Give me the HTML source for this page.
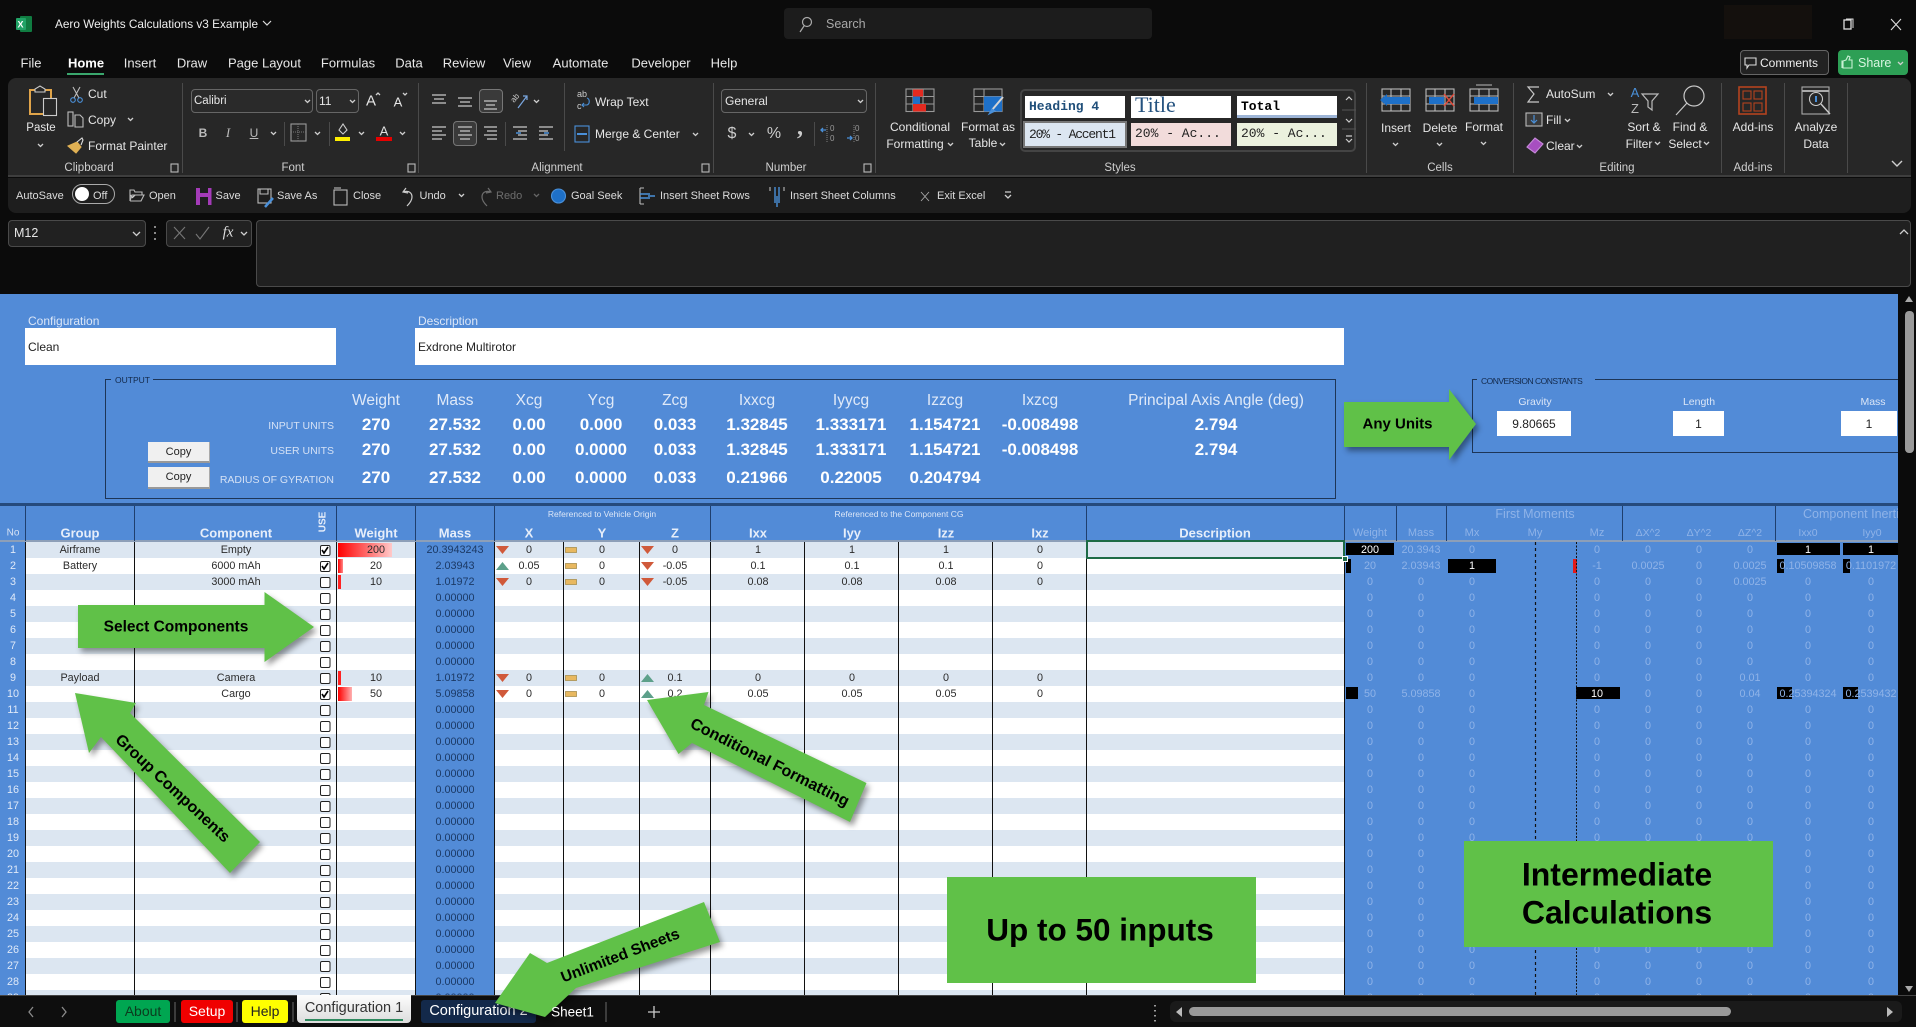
<!DOCTYPE html>
<html><head><meta charset="utf-8"><title>Aero Weights Calculations v3 Example</title>
<style>
html,body{margin:0;padding:0;background:#0b0b0b}
#w{position:relative;width:1916px;height:1027px;overflow:hidden;background:#0b0b0b;font-family:"Liberation Sans",sans-serif;color:#e6e6e6;font-size:12px}
.c{position:absolute;transform:translate(-50%,-50%);white-space:nowrap}
.l{position:absolute;transform:translateY(-50%);white-space:nowrap}
.b{position:absolute;box-sizing:border-box}
svg{position:absolute;left:0;top:0;overflow:visible}
.m{font-size:13px;color:#e8e8e8}
.g{font-size:11.5px;color:#cfcfcf;top:168px}
.q{font-size:11px;color:#dcdcdc;top:196px}
.col{position:absolute;top:542px;transform:translateX(-50%);text-align:center;line-height:16px;white-space:pre;font-size:10.8px;color:#2b2b2b}
.f{color:#8fb3e8}
.w{color:#fff}
.h{font-size:13px;font-weight:bold;color:#e6eefa;top:533px}
.oh{font-size:15.5px;color:#dfe9f8;top:401px}
.ov{font-size:17px;font-weight:bold;color:#fff}
.ol{font-size:10.5px;color:#d4e1f5}
.st{position:absolute;box-sizing:border-box;overflow:hidden;white-space:nowrap;font-family:"Liberation Mono",monospace;font-size:13px;color:#222;line-height:21px;padding-left:4px}
.tab{position:absolute;box-sizing:border-box;top:1000px;height:23px;border-radius:3px;text-align:center;line-height:23px;font-size:14px}
.v{position:absolute;width:1px;top:542px;height:453px;background:#111}
.hv{position:absolute;width:1px;top:506px;height:35px;background:#1f3f6e}
.sep{position:absolute;width:1px;top:83px;height:90px;background:#4a4a4a}
</style></head><body><div id="w">

<!-- title bar -->
<svg width="1916" height="300">
<rect x="20" y="16" width="12" height="16" rx="1" fill="#107c41"/><rect x="16" y="18" width="10" height="12" rx="1" fill="#21a366"/>
<text x="17.500" y="27.500" font-size="9" font-weight="bold" fill="#fff" font-family="Liberation Sans">X</text>
<path d="M263 21l4 4 4-4" fill="none" stroke="#ddd" stroke-width="1.2"/>
<rect x="1844" y="20" width="7" height="9" fill="none" stroke="#ddd" stroke-width="1.3"/><path d="M1846 19h7v9" fill="none" stroke="#ddd"/>
<path d="M1891 19l10 11M1901 19l-10 11" stroke="#ddd" stroke-width="1.1"/>
</svg>
<div class="b" style="left:784px;top:8px;width:368px;height:31px;background:#1c1c1c;border-radius:4px"></div>
<div class="l" style="left:826px;top:24px;color:#a8a8a8;font-size:12.5px">Search</div>
<div class="l" style="left:55px;top:24px;font-size:11.8px;color:#efefef">Aero Weights Calculations v3 Example</div>
<svg width="1916" height="60"><circle cx="807" cy="22" r="4.5" fill="none" stroke="#aaa" stroke-width="1.2"/><path d="M804 26l-4 6" stroke="#aaa" stroke-width="1.2"/></svg>
<div class="b" style="left:1724px;top:5px;width:88px;height:34px;background:#14100d"></div>

<!-- menu -->
<div class="c m" style="left:31px;top:63px">File</div>
<div class="c m" style="left:86px;top:63px;color:#fff;font-weight:bold">Home</div>
<div class="b" style="left:67px;top:72.5px;width:37px;height:2px;background:#3aa76d"></div>
<div class="c m" style="left:140px;top:63px">Insert</div>
<div class="c m" style="left:192px;top:63px">Draw</div>
<div class="c m" style="left:264.5px;top:63px">Page Layout</div>
<div class="c m" style="left:348px;top:63px">Formulas</div>
<div class="c m" style="left:409px;top:63px">Data</div>
<div class="c m" style="left:464px;top:63px">Review</div>
<div class="c m" style="left:517px;top:63px">View</div>
<div class="c m" style="left:580.5px;top:63px">Automate</div>
<div class="c m" style="left:661px;top:63px">Developer</div>
<div class="c m" style="left:724px;top:63px">Help</div>
<div class="b" style="left:1740px;top:50px;width:89px;height:25px;border:1px solid #666;border-radius:4px;background:#222"></div>
<div class="l" style="left:1760px;top:63px;font-size:12px;color:#eee">Comments</div>
<div class="b" style="left:1838px;top:50px;width:70px;height:25px;border-radius:4px;background:#2d9f55"></div>
<div class="l" style="left:1858px;top:63px;font-size:12.5px;color:#d8f5e0">Share</div>

<!-- ribbon -->
<div class="b" style="left:8px;top:78px;width:1903px;height:99px;background:#272727;border-radius:8px 8px 0 0;border-bottom:2px solid #3e3e3e"></div>
<div class="b" style="left:8px;top:178px;width:1903px;height:35px;background:#1e1e1e;border-radius:0 0 8px 8px"></div>

<div class="sep" style="left:182px"></div><div class="sep" style="left:418px"></div><div class="sep" style="left:713px"></div><div class="sep" style="left:875px"></div><div class="sep" style="left:1366px"></div><div class="sep" style="left:1513px"></div><div class="sep" style="left:1721px"></div><div class="sep" style="left:1784px"></div><div class="sep" style="left:1847px"></div>
<div class="b" style="left:284px;top:122px;width:1px;height:24px;background:#4a4a4a"></div>
<div class="b" style="left:329px;top:122px;width:1px;height:24px;background:#4a4a4a"></div>
<div class="b" style="left:505px;top:122px;width:1px;height:24px;background:#4a4a4a"></div>
<div class="b" style="left:564px;top:83px;width:1px;height:68px;background:#4a4a4a"></div>
<div class="b" style="left:814px;top:122px;width:1px;height:24px;background:#4a4a4a"></div>

<!-- clipboard -->
<div class="c" style="left:41px;top:128px;font-size:11.5px">Paste</div>
<div class="l" style="left:88px;top:94px">Cut</div>
<div class="l" style="left:88px;top:120px">Copy</div>
<div class="l" style="left:88px;top:146px">Format Painter</div>
<div class="c g" style="left:89px">Clipboard</div>

<!-- font -->
<div class="b" style="left:191px;top:89px;width:122px;height:24px;border:1px solid #666;border-radius:4px;background:#2a2a2a"></div>
<div class="l" style="left:194px;top:101px;font-size:11.5px">Calibri</div>
<div class="b" style="left:316px;top:89px;width:43px;height:24px;border:1px solid #666;border-radius:4px;background:#2a2a2a"></div>
<div class="l" style="left:319px;top:101px;font-size:12px">11</div>
<div class="c" style="left:371px;top:101px;font-size:15px">A</div>
<div class="c" style="left:398px;top:102px;font-size:13px">A</div>
<div class="c" style="left:203px;top:133px;font-weight:bold;color:#bbb;font-size:12px">B</div>
<div class="c" style="left:228px;top:133px;font-style:italic;color:#bbb;font-family:'Liberation Serif',serif;font-size:13px">I</div>
<div class="c" style="left:254px;top:133px;text-decoration:underline;color:#bbb">U</div>
<div class="c" style="left:384px;top:131px;font-size:13px;color:#ddd">A</div>
<div class="c g" style="left:293px">Font</div>

<!-- alignment -->
<div class="b" style="left:479px;top:89px;width:24px;height:24px;border:1px solid #777;border-radius:4px;background:#3a3a3a"></div>
<div class="b" style="left:453px;top:121px;width:24px;height:25px;border:1px solid #777;border-radius:4px;background:#3a3a3a"></div>
<div class="l" style="left:595px;top:102px">Wrap Text</div>
<div class="l" style="left:595px;top:134px">Merge &amp; Center</div>
<div class="c g" style="left:557px">Alignment</div>

<!-- number -->
<div class="b" style="left:721px;top:89px;width:146px;height:24px;border:1px solid #666;border-radius:4px;background:#2a2a2a"></div>
<div class="l" style="left:725px;top:101px;font-size:12px">General</div>
<div class="c" style="left:732px;top:134px;font-size:16px;color:#ccc">$</div>
<div class="c" style="left:774px;top:134px;font-size:16px;color:#ccc">%</div>
<div class="c" style="left:800px;top:128px;font-size:24px;font-weight:bold;color:#ccc;font-family:'Liberation Serif',serif">,</div>
<div class="c g" style="left:786px">Number</div>

<!-- styles -->
<div class="c" style="left:920px;top:127px">Conditional</div>
<div class="c" style="left:915px;top:144px">Formatting</div>
<div class="c" style="left:988px;top:127px">Format as</div>
<div class="c" style="left:983px;top:143px">Table</div>
<div class="b" style="left:1020px;top:89px;width:336px;height:63px;border:2px solid #444;border-radius:5px"></div>
<div class="st" style="left:1025px;top:96px;width:100px;height:21.5px;background:#fff;color:#1f4e79;font-weight:bold">Heading 4</div>
<div class="st" style="left:1131px;top:96px;width:100px;height:21.5px;background:#fff;color:#24527f;font-family:'Liberation Serif',serif;font-size:22px;line-height:17px;padding-left:4px">Title</div>
<div class="st" style="left:1237px;top:96px;width:100px;height:21.5px;background:#fff;color:#000;font-weight:bold;border-bottom:3px solid #9db4d6">Total</div>
<div class="st" style="left:1023px;top:121px;width:104px;height:27px;background:#dce6f1;border:2px solid #777;line-height:23px;letter-spacing:-1.2px">20% - Accent1</div>
<div class="st" style="left:1131px;top:123px;width:100px;height:23px;background:#f2dcdb">20% - Ac...</div>
<div class="st" style="left:1237px;top:123px;width:100px;height:23px;background:#ebf1de">20% - Ac...</div>
<div class="c g" style="left:1120px">Styles</div>

<!-- cells -->
<div class="c" style="left:1396px;top:128px">Insert</div>
<div class="c" style="left:1440px;top:128px">Delete</div>
<div class="c" style="left:1484px;top:127px">Format</div>
<div class="c g" style="left:1440px">Cells</div>

<!-- editing -->
<div class="l" style="left:1546px;top:94px">AutoSum</div>
<div class="l" style="left:1546px;top:120px">Fill</div>
<div class="l" style="left:1546px;top:146px">Clear</div>
<div class="c" style="left:1644px;top:127px">Sort &amp;</div>
<div class="c" style="left:1639px;top:144px">Filter</div>
<div class="c" style="left:1690px;top:127px">Find &amp;</div>
<div class="c" style="left:1685px;top:144px">Select</div>
<div class="c g" style="left:1617px">Editing</div>
<div class="c" style="left:1753px;top:127px">Add-ins</div>
<div class="c g" style="left:1753px">Add-ins</div>
<div class="c" style="left:1816px;top:127px">Analyze</div>
<div class="c" style="left:1816px;top:144px">Data</div>

<!-- QAT -->
<div class="l q" style="left:16px">AutoSave</div>
<div class="b" style="left:72px;top:184px;width:43px;height:20px;border:1.5px solid #aaa;border-radius:10px"></div>
<div class="b" style="left:75px;top:187px;width:14px;height:14px;border-radius:50%;background:#fff"></div>
<div class="l q" style="left:93px">Off</div>
<div class="l q" style="left:149px">Open</div>
<div class="l q" style="left:215.5px">Save</div>
<div class="l q" style="left:277px">Save As</div>
<div class="l q" style="left:353px">Close</div>
<div class="l q" style="left:419.5px">Undo</div>
<div class="l q" style="left:496px;color:#6d6d6d">Redo</div>
<div class="l q" style="left:571px">Goal Seek</div>
<div class="l q" style="left:660px">Insert Sheet Rows</div>
<div class="l q" style="left:790px">Insert Sheet Columns</div>
<div class="l q" style="left:937px">Exit Excel</div>

<!-- formula bar -->
<div class="b" style="left:8px;top:220px;width:138px;height:27px;background:#212121;border:1px solid #4a4a4a;border-radius:4px"></div>
<div class="l" style="left:14px;top:233px;font-size:12.5px">M12</div>
<div class="b" style="left:166px;top:220px;width:86px;height:27px;background:#212121;border:1px solid #4a4a4a;border-radius:4px"></div>
<div class="c" style="left:228px;top:233px;font-family:'Liberation Serif',serif;font-style:italic;font-size:15px;color:#ddd">fx</div>
<div class="b" style="left:256px;top:220px;width:1655px;height:67px;background:#202020;border:1px solid #4a4a4a;border-radius:4px"></div>

<!-- ribbon icons -->
<svg width="1916" height="300" fill="none" stroke="#bdbdbd" stroke-width="1.1" font-family="Liberation Sans">
<path d="M35 90h-5v24h13" stroke="#e0a44a" stroke-width="2"/><path d="M45 90h6v8" stroke="#e0a44a" stroke-width="2"/><path d="M35 92v-3l5-3 5 3v3z" stroke="#ccc"/>
<rect x="43.500" y="98.500" width="13" height="17" stroke="#ccc"/>
<path d="M73 87l6 11M80 87l-6 11"/><circle cx="73" cy="100" r="2.300" stroke="#4a90d9"/><circle cx="80" cy="100" r="2.300" stroke="#4a90d9"/>
<rect x="68" y="112" width="5" height="14"/><path d="M75 115h5l3 3v9H75z"/>
<path d="M68 146l9-4 4 5-5 6z" fill="#e0b154" stroke="#e0b154"/><path d="M77 142l5-4 1 2-2 5" stroke="#ddd"/>
<!-- dropdown chevrons -->
<g stroke="#cfcfcf" stroke-width="1.3">
<path d="M38 144l2.500 2.500 2.500-2.500"/><path d="M128 118l2.500 2.500 2.500-2.500"/>
<path d="M305 100l2.500 2.500 2.500-2.500"/><path d="M350 100l2.500 2.500 2.500-2.500"/><path d="M271 132l2.500 2.500 2.500-2.500"/><path d="M315 132l2.500 2.500 2.500-2.500"/><path d="M359 132l2.500 2.500 2.500-2.500"/><path d="M400 132l2.500 2.500 2.500-2.500"/>
<path d="M534 100l2.500 2.500 2.500-2.500"/><path d="M693 133l2.500 2.500 2.500-2.500"/>
<path d="M858 100l2.500 2.500 2.500-2.500"/><path d="M749 133l2.500 2.500 2.500-2.500"/>
<path d="M948 143l2.500 2.500 2.500-2.500"/><path d="M1000 143l2.500 2.500 2.500-2.500"/>
<path d="M1393 143l2.500 2.500 2.500-2.500"/><path d="M1437 143l2.500 2.500 2.500-2.500"/><path d="M1481 142l2.500 2.500 2.500-2.500"/>
<path d="M1608 93l2.500 2.500 2.500-2.500"/><path d="M1565 119l2.500 2.500 2.500-2.500"/><path d="M1577 145l2.500 2.500 2.500-2.500"/>
<path d="M1655 142l2.500 2.500 2.500-2.500"/><path d="M1704 142l2.500 2.500 2.500-2.500"/>
<path d="M1892 161l5 5 5-5" stroke-width="1.4"/>
<path d="M1900 234l4-4 4 4"/><path d="M133 232l3.500 3.500 3.500-3.500"/><path d="M241 232l3 3 3-3"/>
<path d="M1898 62l2.500 2.500 2.500-2.500"/>
<path d="M459 194l2.500 2.500 2.500-2.500"/><path d="M534 194l2.500 2.500 2.500-2.500" stroke="#666"/><path d="M130 195l2.500 2.500 2.500-2.500"/>
<path d="M1005 192h6M1005 195l3 3 3-3"/>
<path d="M376 95l2-2 2 2M403 93l2 2 2-2"/>
</g>
<path d="M921 192l8 9M929 192l-8 9" stroke="#aaa" stroke-width=".9"/>
<!-- launchers -->
<g stroke="#bbb"><rect x="171" y="164" width="7" height="8"/><rect x="408" y="164" width="7" height="8"/><rect x="702" y="164" width="7" height="8"/><rect x="864" y="164" width="7" height="8"/></g>
<!-- border -->
<rect x="291" y="124" width="15" height="17" stroke="#999"/><path d="M291 132h15M298 124v17" stroke="#777" stroke-dasharray="1 1"/>
<!-- fill -->
<path d="M339 130l4-6 4 6-4 4z" stroke="#ccc"/><rect x="335" y="137" width="15" height="4" fill="#ffef00" stroke="none"/>
<rect x="376" y="137" width="16" height="4" fill="#e60000" stroke="none"/>
<!-- align -->
<g stroke="#c8c8c8" stroke-width="1.3">
<path d="M432 95h14M434 99h10M432 103h14"/><path d="M458 98h14M460 102h10M458 106h14"/><path d="M484 101h13M486 105h9M484 109h13"/>
<path d="M432 127h14M432 131h10M432 135h14M432 139h10"/><path d="M458 127h14M460 131h10M458 135h14M460 139h10"/><path d="M484 127h13M487 131h10M484 135h13M487 139h10"/>
<path d="M513 127h14M518 131h9M518 135h9M513 139h14"/><path d="M539 127h14M539 131h9M539 135h9M539 139h14"/>
</g>
<text transform="translate(514 103) rotate(-50)" font-size="8" fill="#ccc" stroke="none">ab</text>
<path d="M518 108l9-12M523 96h4v4" stroke="#7aa7e0" stroke-width="1.200"/>
<text x="577" y="97" font-size="9" fill="#ccc" stroke="none">ab</text><text x="577" y="109" font-size="9" fill="#ccc" stroke="none">c</text>
<path d="M587 98c3 1 3 6 0 7h-5M584 103l-2 2 2 2" stroke="#4a90d9" stroke-width="1.100"/>
<path d="M516 133h5M544 133h5" stroke="#4a90d9" stroke-width="1.6"/>
<rect x="575" y="126" width="14" height="16" stroke="#4a90d9"/><path d="M577 134h10" stroke="#4a90d9" stroke-width="2"/>
<!-- number icons -->
<text x="830" y="131" font-size="8" fill="#9a9a9a" stroke="none">0</text><text x="830" y="141" font-size="8" fill="#9a9a9a" stroke="none">0</text>
<path d="M827 125v17" stroke="#777" stroke-dasharray="1 1"/><path d="M821 130h5M823 128l-2 2 2 2" stroke="#4a90d9" stroke-width="1.3"/>
<text x="855" y="131" font-size="8" fill="#9a9a9a" stroke="none">0</text><text x="855" y="141" font-size="8" fill="#9a9a9a" stroke="none">0</text>
<path d="M854 125v17" stroke="#777" stroke-dasharray="1 1"/><path d="M847 138h5M850 136l2 2-2 2" stroke="#4a90d9" stroke-width="1.3"/>
<!-- cond fmt -->
<g stroke="#999"><rect x="906" y="89" width="28" height="22.500"/><path d="M906 96.500h28M906 104h28M913 89v22.500M923 89v22.500"/></g>
<rect x="913" y="89.500" width="10" height="7" fill="#e32a20" stroke="none"/><rect x="913" y="96.500" width="7" height="7.500" fill="#1e70c8" stroke="none"/><rect x="913" y="104" width="13" height="7.500" fill="#e32a20" stroke="none"/>
<!-- format as table -->
<g stroke="#999"><rect x="974" y="89" width="28" height="22.500"/><path d="M974 96.500h28M974 104h28M984 89v22.500"/></g>
<rect x="984" y="96.500" width="18" height="15" fill="#1e70c8" stroke="none"/>
<path d="M1003 97l-11 13" stroke="#d5d5d5" stroke-width="2"/><path d="M989 114l3-5 3 2z" fill="#4a90d9" stroke="#4a90d9"/>
<!-- gallery scroll -->
<g stroke="#555"><path d="M1342 110h14M1342 129h14"/></g>
<g stroke="#ccc" stroke-width="1.2"><path d="M1346 100l3-3 3 3M1346 119l3 3 3-3M1346 139l3 3 3-3M1346 136h6"/></g>
<!-- insert delete format -->
<g stroke="#bbb"><rect x="1382" y="89" width="28" height="22"/><path d="M1382 96h28M1382 104h28M1391 89v22M1401 89v22"/>
<rect x="1426" y="89" width="28" height="22"/><path d="M1426 96h28M1426 104h28M1435 89v22M1445 89v22"/>
<rect x="1470" y="89" width="28" height="22"/><path d="M1470 96h28M1470 104h28M1479 89v22M1489 89v22M1476 85h16"/></g>
<rect x="1386" y="97" width="24" height="7" fill="#1e70c8" stroke="none"/><path d="M1380 100l7-6v12z" fill="#1e70c8" stroke="none"/>
<rect x="1429" y="97" width="15" height="7" fill="#1e70c8" stroke="none"/><path d="M1444 94l10 12M1454 94l-10 12" stroke="#e04a3a" stroke-width="1.4"/>
<rect x="1474" y="97" width="24" height="7" fill="#1e70c8" stroke="none"/>
<!-- editing -->
<path d="M1539 87h-11l6 7-6 8h11" stroke="#c8c8c8" stroke-width="1.2"/>
<rect x="1526" y="113" width="16" height="13" stroke="#bbb" fill="#3a3a3a"/><path d="M1534 115v7M1531 120l3 3 3-3" stroke="#4a90d9" stroke-width="1.2"/>
<path d="M1527 147l8-9 8 6-8 9z" fill="#a74fc0" stroke="#c58ad8"/>
<text x="1635" y="97" font-size="13" text-anchor="middle" fill="#4a90d9" stroke="none">A</text><text x="1635" y="113" font-size="13" text-anchor="middle" fill="#bbb" stroke="none">Z</text>
<path d="M1642 94h16l-6 7v9l-4 -3v-6z" stroke="#bbb" stroke-width="1.2"/>
<circle cx="1694" cy="96" r="10" stroke="#c8c8c8" stroke-width="1.2"/><path d="M1687 103l-11 12" stroke="#c8c8c8" stroke-width="1.2"/>
<rect x="1739" y="87" width="27" height="27" stroke="#b4431e" stroke-width="1.6"/><rect x="1743" y="91" width="8" height="8" stroke="#b4431e"/><rect x="1754" y="91" width="8" height="8" stroke="#b4431e"/><rect x="1743" y="103" width="8" height="8" stroke="#b4431e"/><rect x="1754" y="103" width="8" height="8" stroke="#b4431e"/>
<rect x="1802" y="87" width="27" height="27" stroke="#aaa"/><path d="M1802 91h27" stroke="#aaa" stroke-width="2"/><circle cx="1816" cy="99" r="6.500" stroke="#ccc"/><path d="M1821 104l9 10" stroke="#ccc" stroke-width="1.4"/><path d="M1816 96v6" stroke="#4a90d9" stroke-width="2"/>
<!-- qat icons -->
<path d="M130 201v-11h4l1 2h7v3M130 201h11l3-6h-12l-2 6" stroke="#bbb"/>
<rect x="196" y="188" width="15.500" height="17" fill="#a43bb8" stroke="none"/><rect x="200" y="188" width="8" height="5" fill="#1e1e1e" stroke="none"/><rect x="200" y="197" width="8" height="8" fill="#1e1e1e" stroke="none"/>
<rect x="258" y="189" width="13" height="14" stroke="#bbb"/><path d="M260 189v5h8v-5" stroke="#bbb"/><path d="M265 207l8-9" stroke="#4a90d9" stroke-width="2.500"/>
<rect x="334" y="190" width="13" height="15" stroke="#bbb"/><path d="M334 188h7" stroke="#bbb"/>
<path d="M406 188l-3 4 5 1M403 192c6-2 9 1 9 5s-3 7-5 9" stroke="#ccc" stroke-width="1.2"/>
<path d="M488 188l3 4-5 1M491 192c-6-2-9 1-9 5s3 7 5 9" stroke="#6d6d6d" stroke-width="1.2"/>
<circle cx="558.500" cy="196" r="7" fill="#1e70c8" stroke="#4a90d9"/>
<path d="M640 188h4M640 204h4M640 188v16" stroke="#bbb"/><path d="M640 194h10M640 198h10M648 196h7" stroke="#4a90d9" stroke-width="1.4"/>
<path d="M770 187v4M784 187v4" stroke="#bbb"/><path d="M775 187v16M779 187v16M777 196v11" stroke="#4a90d9" stroke-width="1.4"/>
<!-- formula icons -->
<path d="M174 227l11 12M185 227l-11 12" stroke="#777" stroke-width="1.1"/><path d="M196 234l4 5 9-12" stroke="#777" stroke-width="1.1"/>
<path d="M155 226v2M155 232v2M155 238v2" stroke="#ccc" stroke-width="1.3"/>
<path d="M1745 58h11v7h-7l-2 3v-3h-2z" stroke="#ddd"/>
<path d="M1843 68v-7l3-1 2-4 2 1-1 3h3v8zM1843 61h-1v7" stroke="#c8f0d4"/>
</svg>

<!-- sheet -->
<div class="b" style="left:0;top:0;width:1898px;height:995px;overflow:hidden">
<div class="b" style="left:0;top:294px;width:1898px;height:701px;background:#528bd7"></div>
<div class="b" style="left:25px;top:542px;width:390px;height:453px;background:repeating-linear-gradient(#dce6f1 0 16px,#fff 16px 32px)"></div>
<div class="b" style="left:494px;top:542px;width:850.5px;height:453px;background:repeating-linear-gradient(#dce6f1 0 16px,#fff 16px 32px)"></div>

<div class="l" style="left:28px;top:321px;font-size:12px;color:#dbe6f7">Configuration</div>
<div class="b" style="left:25px;top:328px;width:311px;height:37px;background:#fff"></div>
<div class="l" style="left:28px;top:347px;font-size:12px;color:#222">Clean</div>
<div class="l" style="left:418px;top:321px;font-size:12px;color:#dbe6f7">Description</div>
<div class="b" style="left:415px;top:328px;width:929px;height:37px;background:#fff"></div>
<div class="l" style="left:418px;top:347px;font-size:12px;color:#222">Exdrone Multirotor</div>

<!-- output box -->
<div class="b" style="left:105px;top:379px;width:1231px;height:120px;border:1.5px solid #1d3557"></div>
<div class="b" style="left:111px;top:375px;width:42px;height:10px;background:#528bd7"></div>
<div class="l" style="left:115px;top:380px;font-size:8.5px;color:#13294a">OUTPUT</div>

<div class="c oh" style="left:376px">Weight</div><div class="c oh" style="left:455px">Mass</div><div class="c oh" style="left:529px">Xcg</div><div class="c oh" style="left:601px">Ycg</div><div class="c oh" style="left:675px">Zcg</div><div class="c oh" style="left:757px">Ixxcg</div><div class="c oh" style="left:851px">Iyycg</div><div class="c oh" style="left:945px">Izzcg</div><div class="c oh" style="left:1040px">Ixzcg</div><div class="c oh" style="left:1216px">Principal Axis Angle (deg)</div>

<div class="l ol" style="right:1564px;top:426px">INPUT UNITS</div>
<div class="l ol" style="right:1564px;top:451px">USER UNITS</div>
<div class="l ol" style="right:1564px;top:480px">RADIUS OF GYRATION</div>

<div class="c ov" style="left:376px;top:425px">270</div><div class="c ov" style="left:455px;top:425px">27.532</div><div class="c ov" style="left:529px;top:425px">0.00</div><div class="c ov" style="left:601px;top:425px">0.000</div><div class="c ov" style="left:675px;top:425px">0.033</div><div class="c ov" style="left:757px;top:425px">1.32845</div><div class="c ov" style="left:851px;top:425px">1.333171</div><div class="c ov" style="left:945px;top:425px">1.154721</div><div class="c ov" style="left:1040px;top:425px">-0.008498</div><div class="c ov" style="left:1216px;top:425px">2.794</div>
<div class="c ov" style="left:376px;top:450px">270</div><div class="c ov" style="left:455px;top:450px">27.532</div><div class="c ov" style="left:529px;top:450px">0.00</div><div class="c ov" style="left:601px;top:450px">0.0000</div><div class="c ov" style="left:675px;top:450px">0.033</div><div class="c ov" style="left:757px;top:450px">1.32845</div><div class="c ov" style="left:851px;top:450px">1.333171</div><div class="c ov" style="left:945px;top:450px">1.154721</div><div class="c ov" style="left:1040px;top:450px">-0.008498</div><div class="c ov" style="left:1216px;top:450px">2.794</div>
<div class="c ov" style="left:376px;top:478px">270</div><div class="c ov" style="left:455px;top:478px">27.532</div><div class="c ov" style="left:529px;top:478px">0.00</div><div class="c ov" style="left:601px;top:478px">0.0000</div><div class="c ov" style="left:675px;top:478px">0.033</div><div class="c ov" style="left:757px;top:478px">0.21966</div><div class="c ov" style="left:851px;top:478px">0.22005</div><div class="c ov" style="left:945px;top:478px">0.204794</div>

<div class="b" style="left:148px;top:442px;width:62px;height:21px;background:#f0f0f0;border-bottom:2px solid #999;border-right:1px solid #aaa;text-align:center;line-height:20px;font-size:11px;color:#222">Copy</div>
<div class="b" style="left:148px;top:467px;width:62px;height:22px;background:#f0f0f0;border-bottom:2px solid #999;border-right:1px solid #aaa;text-align:center;line-height:20px;font-size:11px;color:#222">Copy</div>

<!-- conversion -->
<div class="b" style="left:1472px;top:379px;width:440px;height:74px;border:1.5px solid #1d3557"></div>
<div class="b" style="left:1477px;top:375px;width:118px;height:10px;background:#528bd7"></div>
<div class="l" style="left:1481px;top:381px;font-size:8.5px;color:#13294a;letter-spacing:-.5px">CONVERSION CONSTANTS</div>
<div class="c" style="left:1535px;top:402px;font-size:10.5px;color:#dbe6f7">Gravity</div>
<div class="c" style="left:1699px;top:402px;font-size:10.5px;color:#dbe6f7">Length</div>
<div class="c" style="left:1873px;top:402px;font-size:10.5px;color:#dbe6f7">Mass</div>
<div class="b" style="left:1497px;top:411px;width:74px;height:25px;background:#fff;text-align:center;line-height:27px;font-size:12px;color:#222">9.80665</div>
<div class="b" style="left:1673px;top:411px;width:51px;height:25px;background:#fff;text-align:center;line-height:27px;font-size:12px;color:#222">1</div>
<div class="b" style="left:1841px;top:411px;width:56px;height:25px;background:#fff;text-align:center;line-height:27px;font-size:12px;color:#222">1</div>

<!-- table header -->
<div class="b" style="left:0;top:503px;width:1898px;height:3px;background:#254a7c"></div>
<div class="b" style="left:0;top:540px;width:1898px;height:2px;background:#8d9fb8"></div>
<div class="hv" style="left:25px"></div><div class="hv" style="left:134px"></div><div class="hv" style="left:336px"></div><div class="hv" style="left:415px"></div><div class="hv" style="left:494px"></div><div class="hv" style="left:710px"></div><div class="hv" style="left:1086px"></div><div class="hv" style="left:1344px"></div><div class="hv" style="left:1396px"></div><div class="hv" style="left:1446px"></div><div class="hv" style="left:1622px"></div><div class="hv" style="left:1775px"></div>
<div class="c" style="left:13px;top:533px;font-size:10px;color:#d6e2f5">No</div>
<div class="c h" style="left:80px">Group</div><div class="c h" style="left:236px">Component</div>
<div class="c" style="left:323px;top:522px;font-size:10px;font-weight:bold;color:#e6eefa;transform:translate(-50%,-50%) rotate(-90deg)">USE</div>
<div class="c h" style="left:376px">Weight</div><div class="c h" style="left:455px">Mass</div><div class="c h" style="left:529px">X</div><div class="c h" style="left:602px">Y</div><div class="c h" style="left:675px">Z</div><div class="c h" style="left:758px">Ixx</div><div class="c h" style="left:852px">Iyy</div><div class="c h" style="left:946px">Izz</div><div class="c h" style="left:1040px">Ixz</div><div class="c h" style="left:1215px">Description</div>
<div class="c" style="left:602px;top:514px;font-size:8.5px;color:#dbe6f7">Referenced to Vehicle Origin</div>
<div class="c" style="left:899px;top:514px;font-size:8.5px;color:#dbe6f7">Referenced to the Component CG</div>
<div class="c f" style="left:1535px;top:514px;font-size:12.5px">First Moments</div>
<div class="l f" style="left:1803px;top:514px;font-size:12.5px">Component Inertia</div>
<div class="c f" style="left:1370px;top:533px;font-size:11px">Weight</div><div class="c f" style="left:1421px;top:533px;font-size:11px">Mass</div><div class="c f" style="left:1472px;top:533px;font-size:11px">Mx</div><div class="c f" style="left:1535px;top:533px;font-size:11px">My</div><div class="c f" style="left:1597px;top:533px;font-size:11px">Mz</div><div class="c f" style="left:1648px;top:533px;font-size:10.5px">ΔX^2</div><div class="c f" style="left:1699px;top:533px;font-size:10.5px">ΔY^2</div><div class="c f" style="left:1750px;top:533px;font-size:10.5px">ΔZ^2</div><div class="c f" style="left:1808px;top:533px;font-size:10.5px">Ixx0</div><div class="c f" style="left:1872px;top:533px;font-size:10.5px">Iyy0</div>

<!-- vertical lines -->
<div class="v" style="left:25px"></div><div class="v" style="left:134px"></div><div class="v" style="left:336px"></div><div class="v" style="left:415px"></div><div class="v" style="left:494px"></div><div class="v" style="left:563px"></div><div class="v" style="left:639px"></div><div class="v" style="left:710px"></div><div class="v" style="left:804px"></div><div class="v" style="left:898px"></div><div class="v" style="left:992px"></div><div class="v" style="left:1086px"></div><div class="v" style="left:1344px"></div>

<!-- bars -->
<div class="b" style="left:338px;top:543px;width:54px;height:14px;background:linear-gradient(90deg,#f00,#ffc9c9)"></div>
<div class="b" style="left:338px;top:559px;width:5px;height:14px;background:linear-gradient(90deg,#f00,#ff8a8a)"></div>
<div class="b" style="left:338px;top:575px;width:3px;height:14px;background:#f22"></div>
<div class="b" style="left:338px;top:671px;width:3px;height:14px;background:#f22"></div>
<div class="b" style="left:338px;top:687px;width:14px;height:14px;background:linear-gradient(90deg,#f00,#ffb0b0)"></div>

<div class="b" style="left:1346px;top:543px;width:48px;height:12px;background:#000"></div>
<div class="b" style="left:1346px;top:559px;width:5px;height:14px;background:#000"></div>
<div class="b" style="left:1448px;top:559px;width:48px;height:14px;background:#000"></div>
<div class="b" style="left:1573px;top:559px;width:4px;height:14px;background:#e21a1a"></div>
<div class="b" style="left:1777px;top:543px;width:63px;height:12px;background:#000"></div>
<div class="b" style="left:1843px;top:543px;width:55px;height:12px;background:#000"></div>
<div class="b" style="left:1777px;top:559px;width:7px;height:14px;background:#000"></div>
<div class="b" style="left:1843px;top:559px;width:7px;height:14px;background:#000"></div>
<div class="b" style="left:1346px;top:687px;width:12px;height:12px;background:#000"></div>
<div class="b" style="left:1576px;top:687px;width:44px;height:12px;background:#000"></div>
<div class="b" style="left:1777px;top:687px;width:15px;height:12px;background:#000"></div>
<div class="b" style="left:1843px;top:687px;width:15px;height:12px;background:#000"></div>

<!-- table text -->
<div class="col" style="left:13px;color:#dfe9f8">1
2
3
4
5
6
7
8
9
10
11
12
13
14
15
16
17
18
19
20
21
22
23
24
25
26
27
28
29</div>
<div class="col" style="left:80px">Airframe
Battery






Payload</div>
<div class="col" style="left:236px">Empty
6000 mAh
3000 mAh





Camera
Cargo</div>
<div class="col" style="left:376px">200
20
10





10
50</div>
<div class="col" style="left:455px;color:#1c3a66">20.3943243
2.03943
1.01972
0.00000
0.00000
0.00000
0.00000
0.00000
1.01972
5.09858
0.00000
0.00000
0.00000
0.00000
0.00000
0.00000
0.00000
0.00000
0.00000
0.00000
0.00000
0.00000
0.00000
0.00000
0.00000
0.00000
0.00000
0.00000
0.00000</div>
<div class="col" style="left:529px">0
0.05
0





0
0</div>
<div class="col" style="left:602px">0
0
0





0
0</div>
<div class="col" style="left:675px">0
-0.05
-0.05





0.1
0.2</div>
<div class="col" style="left:758px">1
0.1
0.08





0
0.05</div>
<div class="col" style="left:852px">1
0.1
0.08





0
0.05</div>
<div class="col" style="left:946px">1
0.1
0.08





0
0.05</div>
<div class="col" style="left:1040px">0
0
0





0
0</div>

<div class="col f" style="left:1370px"><span class="w">200</span>
20
0
0
0
0
0
0
0
50
0
0
0
0
0
0
0
0
0
0
0
0
0
0
0
0
0
0
0</div>
<div class="col f" style="left:1421px">20.3943
2.03943
0
0
0
0
0
0
0
5.09858
0
0
0
0
0
0
0
0
0
0
0
0
0
0
0
0
0
0
0</div>
<div class="col f" style="left:1472px">0
<span class="w">1</span>
0
0
0
0
0
0
0
0
0
0
0
0
0
0
0
0
0
0
0
0
0
0
0
0
0
0
0</div>
<div class="col f" style="left:1597px">0
-1
0
0
0
0
0
0
0
<span class="w">10</span>
0
0
0
0
0
0
0
0
0
0
0
0
0
0
0
0
0
0
0</div>
<div class="col f" style="left:1648px">0
0.0025
0
0
0
0
0
0
0
0
0
0
0
0
0
0
0
0
0
0
0
0
0
0
0
0
0
0
0</div>
<div class="col f" style="left:1699px">0
0
0
0
0
0
0
0
0
0
0
0
0
0
0
0
0
0
0
0
0
0
0
0
0
0
0
0
0</div>
<div class="col f" style="left:1750px">0
0.0025
0.0025
0
0
0
0
0
0.01
0.04
0
0
0
0
0
0
0
0
0
0
0
0
0
0
0
0
0
0
0</div>
<div class="col f" style="left:1808px"><span class="w">1</span>
0.10509858
0
0
0
0
0
0
0
0.25394324
0
0
0
0
0
0
0
0
0
0
0
0
0
0
0
0
0
0
0</div>
<div class="col f" style="left:1871px;width:54px;overflow:hidden"><span class="w">1</span>
0.1101972
0
0
0
0
0
0
0
0.2539432
0
0
0
0
0
0
0
0
0
0
0
0
0
0
0
0
0
0
0</div>

<!-- checkboxes, cf icons, dashed lines -->
<svg width="1916" height="995">
<defs><pattern id="cb" x="320" y="545" width="12" height="16" patternUnits="userSpaceOnUse"><rect x=".5" y=".5" width="9.500" height="10" rx="1.500" fill="#fff" stroke="#222" stroke-width="1"/></pattern></defs>
<rect x="320" y="545" width="12" height="450" fill="url(#cb)"/>
<path d="M322 550l2 3 4-6M322 566l2 3 4-6M322 694l2 3 4-6" fill="none" stroke="#000" stroke-width="1.600"/>
<g fill="#d0593a"><path d="M496 546h13l-6.500 8z"/><path d="M496 578h13l-6.500 8z"/><path d="M496 674h13l-6.500 8z"/><path d="M496 690h13l-6.500 8z"/><path d="M641 546h13l-6.500 8z"/><path d="M641 562h13l-6.500 8z"/><path d="M641 578h13l-6.500 8z"/></g>
<g fill="#5da08a"><path d="M496 570h13l-6.500-8z"/><path d="M641 682h13l-6.500-8z"/><path d="M641 698h13l-6.500-8z"/></g>
<g fill="#e8b860" stroke="#a8904f" stroke-width=".8"><rect x="565.500" y="547.500" width="11" height="5"/><rect x="565.500" y="563.500" width="11" height="5"/><rect x="565.500" y="579.500" width="11" height="5"/><rect x="565.500" y="675.500" width="11" height="5"/><rect x="565.500" y="691.500" width="11" height="5"/></g>
<path d="M1535.500 542V995" stroke="#111" stroke-width="1.200" stroke-dasharray="3 3"/>
<path d="M1576.500 542V995" stroke="#111" stroke-width="1" stroke-dasharray="2 1.500"/>
</svg>
<div class="b" style="left:1086px;top:540px;width:259px;height:19px;border:2px solid #1e6b46"></div>
<div class="b" style="left:1342px;top:556px;width:6px;height:6px;background:#1e6b46;border:1px solid #fff"></div>
</div>

<!-- v scrollbar -->
<svg width="1916" height="1027">
<path d="M1905 302l4-6 4 6z" fill="#aaa"/><rect x="1905" y="311" width="9" height="142" rx="4" fill="#9a9a9a"/><path d="M1905 986l4 6 4-6z" fill="#aaa"/>
</svg>

<!-- tab bar -->
<div class="b" style="left:0;top:995px;width:1916px;height:32px;background:#0e0e0e;border-top:1px solid #444"></div>
<div class="b" style="left:1170px;top:1001px;width:732px;height:21px;background:#1a1a1a;border-radius:6px"></div>
<svg width="1916" height="1027" fill="none" stroke="#8a8a8a" stroke-width="1.300">
<path d="M33 1007l-4 5 4 5M62 1007l4 5-4 5"/>
<path d="M654 1006v12M648 1012h12" stroke="#ccc"/>
<path d="M606 1002v20M175 1002v20M237 1002v20M293 1002v20" stroke="#555"/>
<path d="M1155 1005v1.500M1155 1010v1.500M1155 1015v1.500M1155 1020v1.500" stroke="#ccc" stroke-width="1.500"/>
<path d="M1182 1007l-6 5 6 5z" fill="#bbb" stroke="none"/><path d="M1887 1007l6 5-6 5z" fill="#bbb" stroke="none"/>
</svg>
<div class="tab" style="left:116px;width:54px;background:#00a651;color:#0b3b1e">About</div>
<div class="tab" style="left:181px;width:52px;background:#f00000;color:#fff">Setup</div>
<div class="tab" style="left:242px;width:46px;background:#ffff00;color:#222">Help</div>
<div class="tab" style="left:297px;top:995px;width:114px;height:28px;background:linear-gradient(#fdfdfd,#dcdcdc);color:#333;line-height:27px;border-radius:0 0 4px 4px;font-size:14.5px">Configuration 1</div>
<div class="b" style="left:305px;top:1019px;width:98px;height:2px;background:#2f8a5f"></div>
<div class="tab" style="left:421px;width:115px;background:#13294a;color:#fff;font-size:14.5px">Configuration 2</div>
<div class="b" style="left:1189px;top:1007px;width:542px;height:9px;background:#9a9a9a;border-radius:5px"></div>

<!-- annotations -->
<svg width="1916" height="1027" font-family="Liberation Sans" font-weight="bold" fill="#000">
<g fill="#60c148" style="filter:drop-shadow(3px 4px 3px rgba(0,0,0,.4))">
<path d="M78 605H264.500V592L314 627 264.500 662V648H78z"/>
<path d="M75 693L136 703 130 713 260 842 230 873 101 737 89 753z"/>
<path d="M647 700L708.500 692 704 705 866.500 783 850 822 692 743 678.500 754z"/>
<path d="M495 1003L530 953 547 963 704 902 720 942 576 988 545 1017z"/>
<path d="M1344 402H1449V389L1476 424 1449 460V447H1344z"/>
</g>
<text x="176" y="631.500" font-size="15.500" text-anchor="middle">Select Components</text>
<text x="1397.500" y="428.500" font-size="15" text-anchor="middle">Any Units</text>
<text transform="translate(173 788) rotate(43)" y="5.500" font-size="16" text-anchor="middle">Group Components</text>
<text transform="translate(770 762) rotate(27)" y="5.500" font-size="16" text-anchor="middle">Conditional Formatting</text>
<text transform="translate(620 955) rotate(-21)" y="5.500" font-size="15.500" text-anchor="middle">Unlimited Sheets</text>
</svg>
<div class="c" style="left:572.500px;top:1012px;font-size:13.500px;color:#fff">Sheet1</div>
<div class="b" style="left:947px;top:877px;width:309px;height:106px;background:#60c148"></div>
<div class="c" style="left:1100px;top:930px;font-size:31.500px;font-weight:bold;color:#000">Up to 50 inputs</div>
<div class="b" style="left:1464px;top:841px;width:309px;height:106px;background:#60c148"></div>
<div class="c" style="left:1617px;top:875px;font-size:32px;font-weight:bold;color:#000">Intermediate</div>
<div class="c" style="left:1617px;top:913px;font-size:32px;font-weight:bold;color:#000">Calculations</div>

</div></body></html>
